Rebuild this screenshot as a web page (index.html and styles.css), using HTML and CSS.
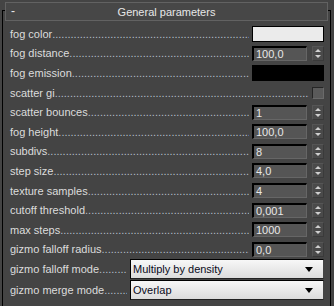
FILE: index.html
```html
<!DOCTYPE html>
<html lang="en">
<head>
  <meta charset="UTF-8" />
  <title>General parameters</title>
  <link rel="stylesheet" href="styles.css">
</head>
<body>
  <div class="rollout">
    <div class="rollout-head">
      <span class="toggle">-</span>
      <span class="title">General parameters</span>
    </div>
    <div class="params">
      <div class="row"><span class="label">fog color</span><span class="dots"></span><div class="swatch light"></div></div>
      <div class="row"><span class="label">fog distance</span><span class="dots"></span><div class="spin"><div class="field">100,0</div><div class="arrows"></div></div></div>
      <div class="row"><span class="label">fog emission</span><span class="dots"></span><div class="swatch dark"></div></div>
      <div class="row"><span class="label">scatter gi</span><span class="dots"></span><div class="check"></div></div>
      <div class="row"><span class="label">scatter bounces</span><span class="dots"></span><div class="spin"><div class="field">1</div><div class="arrows"></div></div></div>
      <div class="row"><span class="label">fog height</span><span class="dots"></span><div class="spin"><div class="field">100,0</div><div class="arrows"></div></div></div>
      <div class="row"><span class="label">subdivs</span><span class="dots"></span><div class="spin"><div class="field">8</div><div class="arrows"></div></div></div>
      <div class="row"><span class="label">step size</span><span class="dots"></span><div class="spin"><div class="field">4,0</div><div class="arrows"></div></div></div>
      <div class="row"><span class="label">texture samples</span><span class="dots"></span><div class="spin"><div class="field">4</div><div class="arrows"></div></div></div>
      <div class="row"><span class="label">cutoff threshold</span><span class="dots"></span><div class="spin"><div class="field">0,001</div><div class="arrows"></div></div></div>
      <div class="row"><span class="label">max steps</span><span class="dots"></span><div class="spin"><div class="field">1000</div><div class="arrows"></div></div></div>
      <div class="row"><span class="label">gizmo falloff radius</span><span class="dots"></span><div class="spin"><div class="field">0,0</div><div class="arrows"></div></div></div>
      <div class="row tall"><span class="label">gizmo falloff mode</span><span class="dots"></span><div class="select">Multiply by density</div></div>
      <div class="row tall"><span class="label">gizmo merge mode</span><span class="dots"></span><div class="select">Overlap</div></div>
    </div>
  </div>
</body>
</html>
```

FILE: styles.css
```css
body {
  margin: 0;
  background: #444444;
  font-family: 'Liberation Sans', Arial, sans-serif;
  font-size: 11px;
  color: #dcdcdc;
  height: 306px;
  overflow: hidden;
}

.rollout {
  margin: 10px 3px 0 2px;
  border: 1px solid #000;
  border-bottom: none;
  height: 300px;
}

.rollout-head {
  margin: -9px 2px 0 2px;
  height: 17px;
  border: 1px solid #626262;
  background: #474747;
  display: flex;
  align-items: center;
  color: #e8e8e8;
  position: relative;
}

.toggle {
  position: absolute;
  left: 5px;
  top: 1px;
  font-size: 12px;
}

.title {
  flex: 1;
  text-align: center;
}

.params {
  padding: 3px 6px 0 7px;
}

.row {
  height: 19.6px;
  display: flex;
  align-items: center;
}

.row.tall {
  height: 20.6px;
}

.label {
  white-space: nowrap;
}

.dots {
  flex: 1;
  overflow: hidden;
  white-space: nowrap;
  margin-right: 3px;
  color: #b4bfcb;
}

.dots::after {
  content: "..............................................................................................";
}

.swatch {
  width: 70px;
  height: 14px;
  border: 1px solid #000;
}

.swatch.light {
  background: #ebebeb;
}

.swatch.dark {
  background: #000;
}

.check {
  width: 10px;
  height: 10px;
  border: 1px solid #252525;
  border-right-color: #6a6a6a;
  border-bottom-color: #6a6a6a;
  background: #5a5a5a;
}

.spin {
  display: flex;
  gap: 5px;
  width: 72px;
}

.field {
  width: 51px;
  height: 12px;
  line-height: 12px;
  border-top: 2px solid #000;
  border-left: 2px solid #000;
  border-right: 1px solid #666;
  border-bottom: 1px solid #666;
  background: #555555;
  color: #e8e8e8;
  padding-left: 2px;
}

.arrows {
  width: 10px;
  height: 13px;
  border: 1px solid #3a3a3a;
  border-top-color: #555;
  border-left-color: #555;
  background: #4a4a4a;
  position: relative;
}

.arrows::before,
.arrows::after {
  content: "";
  position: absolute;
  left: 2px;
  border-left: 3px solid transparent;
  border-right: 3px solid transparent;
}

.arrows::before {
  top: 2px;
  border-bottom: 3px solid #cfcfcf;
}

.arrows::after {
  top: 8px;
  border-top: 3px solid #cfcfcf;
}

.select {
  width: 190px;
  height: 18px;
  line-height: 18px;
  border: 1px solid #000;
  border-right-color: #444;
  border-bottom-color: #222;
  background: linear-gradient(#f7f7f7, #dcdcdc);
  color: #0a0a1a;
  padding-left: 2px;
  position: relative;
}

.select::after {
  content: "";
  position: absolute;
  right: 10px;
  top: 7px;
  border-left: 4px solid transparent;
  border-right: 4px solid transparent;
  border-top: 5px solid #000;
}
```
